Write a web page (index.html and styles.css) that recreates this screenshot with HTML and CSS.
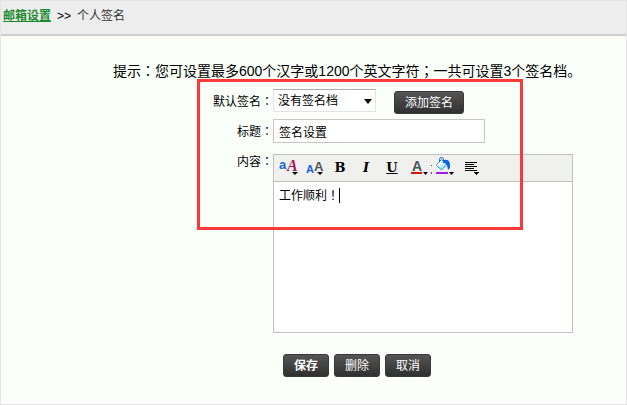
FILE: index.html
```html
<!DOCTYPE html>
<html lang="zh-CN">
<head>
    <meta charset="UTF-8">
    <meta name="viewport" content="width=device-width, initial-scale=1.0">
    <title>个人签名</title>
    <link rel="stylesheet" href="styles.css">
</head>
<body>
    <nav class="crumbs">
        <a href="#">邮箱设置</a>
        <span class="sep">&gt;&gt;</span>
        <span class="current">个人签名</span>
    </nav>
    <main>
        <p class="tip">提示<span class="mark" lang="zh-TW">：</span>您可设置最多600个汉字或1200个英文字符<span class="mark" lang="zh-TW">；</span>一共可设置3个签名档。</p>
        <form class="sign-form">
            <div class="highlight"></div>
            <label for="defaultSign">默认签名<span class="mark" lang="zh-TW">：</span></label>
            <div class="pick-row">
                <div class="select-box">
                    <select id="defaultSign">
                        <option>没有签名档</option>
                    </select>
                    <svg class="arrow" width="8" height="5" viewBox="0 0 8 5"><path d="M0 0h8L4 5z"/></svg>
                </div>
                <button type="button" class="btn btn-add">添加签名</button>
            </div>

            <label for="title">标题<span class="mark" lang="zh-TW">：</span></label>
            <input type="text" id="title" value="签名设置">

            <label for="content" class="content-label">内容<span class="mark" lang="zh-TW">：</span></label>
            <div class="editor">
                <div class="toolbar">
                    <button type="button" title="字体">
                        <svg width="26" height="26" viewBox="0 0 26 26">
                            <text x="4" y="14" class="sans blue" font-size="13">a</text>
                            <text x="12" y="16" class="serif wine" font-size="16">A</text>
                            <path d="M17 17h6l-3 3z"/>
                        </svg>
                    </button>
                    <button type="button" title="字号">
                        <svg width="26" height="26" viewBox="0 0 26 26">
                            <text x="5" y="18" class="sans blue" font-size="11">A</text>
                            <text x="13" y="16" class="sans grey" font-size="13">A</text>
                            <path d="M16 17h6l-3 3z"/>
                        </svg>
                    </button>
                    <button type="button" title="粗体" class="letter">B</button>
                    <button type="button" title="斜体" class="letter italic">I</button>
                    <button type="button" title="下划线" class="letter underline">U</button>
                    <button type="button" title="文字颜色">
                        <svg width="26" height="26" viewBox="0 0 26 26">
                            <text x="7" y="16" class="sans grey" font-size="14">A</text>
                            <path fill="#d8140f" d="M6 17h11v2H6z"/>
                            <path d="M18 17h5l-2.500 3z"/>
                        </svg>
                    </button>
                    <button type="button" title="背景颜色">
                        <svg width="26" height="26" viewBox="0 0 26 26">
                            <path fill="#0f62de" d="M0 10h1v1H0z"/>
                            <path fill="#a01be8" d="M0 17h1v2H0zM5 17h12v2H5z"/>
                            <path fill="#b9efff" stroke="#1685dd" d="M10.500 4.500l5.500 5-5.500 5.500-5-5z"/>
                            <path fill="#fff" d="M10 6l2 2-4 4-2-2z"/>
                            <path fill="none" stroke="#1262cf" d="M8.500 7V4.500q0-2 2-2t2 2V8"/>
                            <path fill="#0f62de" d="M13 5q6-1 6 5v3l-2 2-1-5-3-3z"/>
                            <path d="M18 17h5l-2.500 3z"/>
                        </svg>
                    </button>
                    <button type="button" title="对齐">
                        <svg width="26" height="26" viewBox="0 0 26 26" shape-rendering="crispEdges">
                            <path d="M8 7h12v1H8zM8 9h9v1H8zM8 11h12v1H8zM8 13h9v1H8zM8 15h12v1H8zM17 17h5v1h-1v1h-1v1h-1v-1h-1v-1h-1z"/>
                        </svg>
                    </button>
                </div>
                <div class="editor-body">
                    <textarea id="content" lang="zh-TW">工作顺利！</textarea>
                    <span class="caret"></span>
                </div>
            </div>

            <div class="actions">
                <button type="submit" class="btn btn-save">保存</button>
                <button type="button" class="btn">删除</button>
                <button type="button" class="btn">取消</button>
            </div>
        </form>
    </main>
</body>
</html>
```
FILE: styles.css
```css
* {
    box-sizing: border-box;
}
body {
    margin: 0;
    min-height: 100vh;
    border: 1px solid #e4e4e4;
    background: #fafffa;
    color: #000;
    font: 12px/16px "Liberation Sans", "Noto Sans CJK SC", sans-serif;
}
input, select, textarea, button {
    font: inherit;
    color: inherit;
    margin: 0;
}
.crumbs {
    display: flex;
    gap: 6px;
    height: 35px;
    padding: 7px 2px;
    background: #ededed;
    border-bottom: 2px solid #cfd0cb;
}
.crumbs a {
    color: #1c8a30;
    font-weight: bold;
}
.current {
    color: #333;
}
.mark {
    font-family: "Noto Sans CJK TC", sans-serif;
}
main {
    padding: 24px 0 26px 112px;
}
.tip {
    margin: 0;
    font-size: 14px;
    line-height: 20px;
    white-space: nowrap;
}
.sign-form {
    position: relative;
    display: grid;
    grid-template-columns: 76px 300px;
    margin: 8px 0 0 84px;
}
.sign-form label {
    text-align: right;
    padding-top: 4px;
}

/* red frame over the first part of the form */
.highlight {
    position: absolute;
    top: -10px;
    left: 0;
    width: 326px;
    height: 151px;
    border: 3px solid #fc3838;
    z-index: 1;
    pointer-events: none;
}
.pick-row {
    display: flex;
    gap: 18px;
    height: 30px;
}
.select-box {
    position: relative;
    width: 103px;
    height: 23px;
}
.select-box select {
    appearance: none;
    width: 100%;
    height: 100%;
    padding: 0 4px;
    border: 1px solid #e2e3ea;
    border-top-color: #abadb3;
    border-radius: 0;
    background: #fff;
}
.arrow {
    position: absolute;
    top: 10px;
    right: 4px;
    pointer-events: none;
}
.btn {
    width: 46px;
    height: 23px;
    padding: 0;
    border: 1px solid #383838;
    border-radius: 3px;
    background: linear-gradient(#555, #303030);
    color: #fff;
    cursor: pointer;
}
.btn-add {
    width: 70px;
    margin-top: 2px;
}
.btn-save {
    font-weight: bold;
}
#title {
    width: 212px;
    height: 24px;
    padding: 0 5px;
    border: 1px solid #c6c6c6;
    background: #fff;
}
.editor {
    margin-top: 11px;
    border: 1px solid #bfbfbf;
    background: #fff;
}
.content-label {
    margin-top: 6px;
}
.toolbar {
    display: flex;
    height: 27px;
    padding-left: 1px;
    background: #f0f0ee;
    border-bottom: 1px solid #bfbfbf;
}
.toolbar button {
    width: 26px;
    height: 26px;
    padding: 0;
    border: 0;
    background: none;
    cursor: pointer;
}
.toolbar svg {
    display: block;
}
.toolbar .letter {
    font: bold 13px/26px "DejaVu Serif", serif;
}
.toolbar .italic {
    font-style: italic;
}
.toolbar .underline {
    text-decoration: underline;
}
.sans {
    font-family: "Liberation Sans", sans-serif;
    font-weight: bold;
}
.serif {
    font-family: "Liberation Serif", serif;
    font-weight: bold;
    font-style: italic;
}
.blue {
    fill: #1464dc;
}
.wine {
    fill: #a3195b;
}
.grey {
    fill: #505654;
}
.editor-body {
    position: relative;
}
.editor-body textarea {
    display: block;
    width: 100%;
    height: 150px;
    padding: 5px;
    border: 0;
    background: none;
    font-family: "Noto Sans CJK TC", sans-serif;
    resize: none;
    outline: 0;
}
.caret {
    position: absolute;
    top: 6px;
    left: 65px;
    width: 1px;
    height: 15px;
    background: #000;
}
.actions {
    grid-column: 2;
    display: flex;
    gap: 5px;
    padding: 21px 10px 0;
}
```
